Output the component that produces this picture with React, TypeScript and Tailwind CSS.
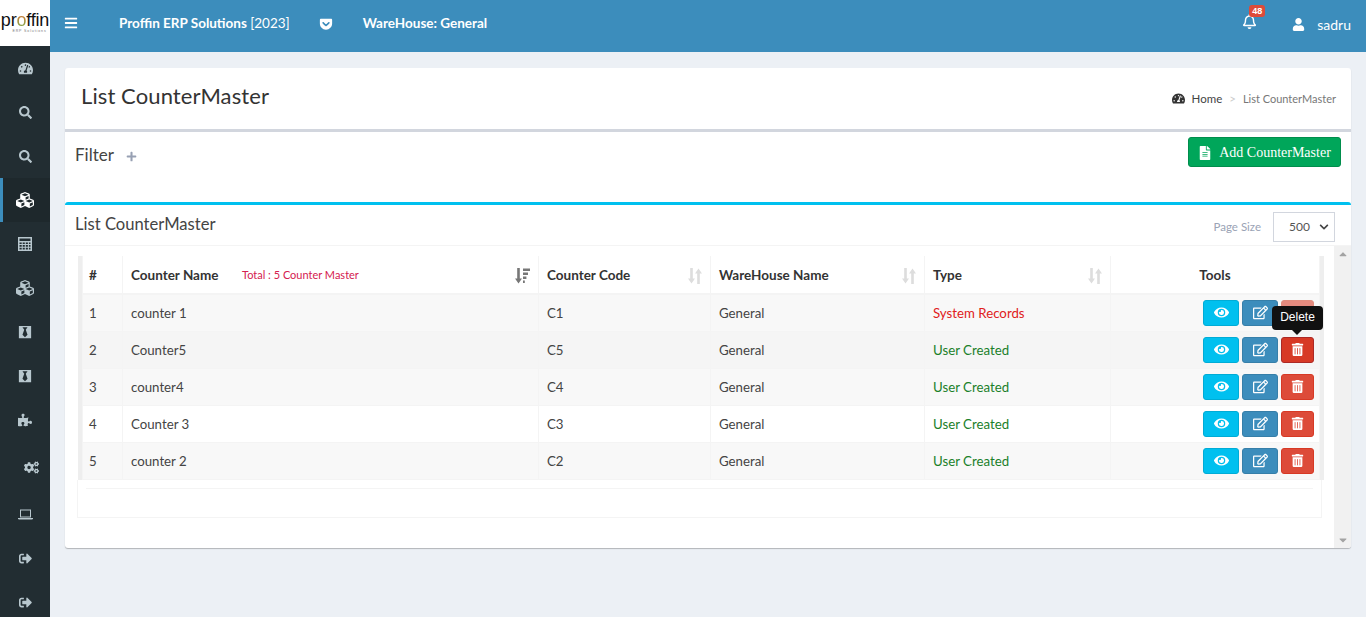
import React from "react";
import { FaBars, FaRegBell, FaBlackTie, FaChevronDown, FaCogs, FaCubes, FaEye, FaFileAlt, FaGetPocket, FaPlus, FaPuzzlePiece, FaRegEdit, FaSearch, FaSignOutAlt, FaTachometerAlt, FaTrashAlt, FaUser, FaCaretUp, FaCaretDown } from "react-icons/fa";

function Calc({ size = 14 }: { size?: number }) {
  return (
    <svg width={size} height={size} viewBox="0 0 14 14" fill="currentColor">
      <path fillRule="evenodd" d="M0 0h14v14H0zM1.5 1.5v2.5h11V1.5zM1.5 5.5v1.6h2.2V5.5zM4.7 5.5v1.6h2.1V5.5zM7.8 5.5v1.6h2.1V5.5zM10.9 5.5v1.6h1.6V5.5zM1.5 8.1v1.6h2.2V8.1zM4.7 8.1v1.6h2.1V8.1zM7.8 8.1v1.6h2.1V8.1zM10.9 8.1v1.6h1.6V8.1zM1.5 10.7v1.8h2.2v-1.8zM4.7 10.7v1.8h2.1v-1.8zM7.8 10.7v1.8h2.1v-1.8zM10.9 10.7v1.8h1.6v-1.8z" />
    </svg>
  );
}

function LaptopIcon({ size = 15 }: { size?: number }) {
  return (
    <svg width={size} height={size} viewBox="0 0 15 15" fill="currentColor">
      <path fillRule="evenodd" d="M2 2.5h11v8H2zM3 3.5v6h9v-6z" />
      <path d="M0 11h15v.6l-.7.9H.7L0 11.6z" />
    </svg>
  );
}

const side = [
  { I: FaTachometerAlt, s: 15 },
  { I: FaSearch, s: 13 },
  { I: FaSearch, s: 13 },
  { I: FaCubes, s: 18, active: true },
  { I: Calc, s: 14 },
  { I: FaCubes, s: 18 },
  { I: FaBlackTie, s: 14 },
  { I: FaBlackTie, s: 14 },
  { I: FaPuzzlePiece, s: 14 },
  { I: FaCogs, s: 15, gear: true },
  { I: LaptopIcon, s: 15 },
  { I: FaSignOutAlt, s: 13 },
  { I: FaSignOutAlt, s: 13 },
];

const rows = [
  ["1", "counter 1", "C1", "General", "System Records"],
  ["2", "Counter5", "C5", "General", "User Created"],
  ["3", "counter4", "C4", "General", "User Created"],
  ["4", "Counter 3", "C3", "General", "User Created"],
  ["5", "counter 2", "C2", "General", "User Created"],
];

function SortIcon() {
  return (
    <svg width="14" height="16" viewBox="0 0 14 16" fill="#dddddd" className="shrink-0">
      <path d="M2.2 0h2.6v10.5H7L3.5 15.5 0 10.5h2.2z" />
      <path d="M9.2 16h2.6V5.5H14L10.5.5 7 5.5h2.2z" />
    </svg>
  );
}

function SortedIcon() {
  return (
    <svg width="15" height="16" viewBox="0 0 15 16" fill="#777777" className="ml-auto shrink-0">
      <path d="M2.2 0h2.6v10.5H7L3.5 15.5 0 10.5h2.2z" />
      <path d="M8 .5h7v2.4H8zM8 4.5h5v2.4H8zM8 8.5h3.4v2.4H8zM8 12.5h1.8v2.4H8z" />
    </svg>
  );
}

export default function App() {
  return (
    <div className="flex h-[617px] w-[1366px] overflow-hidden bg-[#ecf0f5] text-[13.25px] text-[#444444] font-['Lato','Noto_Sans',sans-serif]">
      <aside className="flex w-[50px] shrink-0 flex-col bg-[#222d32]">
        <div className="flex h-[46px] shrink-0 flex-col overflow-hidden bg-white pt-[8px] text-center">
          <div className="font-['Liberation_Sans',sans-serif] text-[18px] leading-[24px] tracking-[-0.2px] text-[#111111]">
            pr<span className="bg-gradient-to-b from-[#e0602f] to-[#5fae4c] bg-clip-text text-transparent">o</span>ffin
          </div>
          <div className="-mt-[3px] whitespace-nowrap pl-[9px] font-['Liberation_Sans',sans-serif] text-[3.5px] leading-[5px] tracking-[0.9px] text-[#777777]">ERP Solutions</div>
        </div>
        {side.map(({ I, s, active, gear }, i) => (
          <div
            key={i}
            className={
              active
                ? "flex h-[44px] shrink-0 items-center justify-center border-l-[3px] border-[#3c8dbc] bg-[#1e282c] pr-[3px] text-white"
                : gear
                  ? "flex h-[50px] shrink-0 items-center justify-center pl-[12px] text-[#b8c7ce]"
                  : "flex h-[44px] shrink-0 items-center justify-center text-[#b8c7ce]"
            }
          >
            <I size={s} />
          </div>
        ))}
      </aside>

      <div className="flex min-w-0 flex-1 flex-col">
        <header className="flex h-[52px] shrink-0 items-center bg-[#3c8dbc] text-[13.5px] text-white">
          <FaBars size={14} className="ml-[14px] -mt-[6px]" />
          <div className="ml-[41px] -mt-[6px] font-bold">
            Proffin ERP Solutions <span className="font-normal">[2023]</span>
          </div>
          <FaGetPocket size={14} className="ml-[29px] -mt-[5px]" />
          <div className="ml-[30px] -mt-[6px] font-bold">WareHouse: General</div>
          <div className="relative ml-auto mr-[35px] -mt-[10px]">
            <FaRegBell size={15} />
            <span className="absolute left-[7px] -top-[9px] rounded-[3px] bg-[#dd4b39] px-[3px] font-['Liberation_Sans',sans-serif] text-[9px] font-bold leading-[12px] text-white">48</span>
          </div>
          <FaUser size={13} className="mr-[12px] -mt-[4px]" />
          <span className="mr-[15px] -mt-[4px] text-[14px]">sadru</span>
        </header>

        <main className="px-[15px] pt-[16px]">
          <section className="flex h-[480px] flex-col rounded-[3px] bg-white shadow-[0_1px_1px_rgba(0,0,0,0.25)]">
            <div className="flex h-[61px] shrink-0 items-center justify-between pl-[16px] pr-[15px]">
              <h1 className="-mt-[5px] text-[22px] leading-none tracking-[0.1px] text-[#333333]">List CounterMaster</h1>
              <div className="flex items-center text-[11.5px] text-[#444444]">
                <FaTachometerAlt size={13} className="text-[#333333]" />
                <span className="ml-[7px]">Home</span>
                <span className="mx-[7px] text-[#cccccc]">&gt;</span>
                <span className="mt-[1px] text-[11px] text-[#777777]">List CounterMaster</span>
              </div>
            </div>

            <div className="flex h-[73px] shrink-0 items-start justify-between border-t-[3px] border-[#d2d6de] pl-[10px] pr-[10px]">
              <div className="mt-[13px] flex items-center text-[17px] leading-[20px] text-[#444444]">
                Filter
                <FaPlus size={11} className="ml-[12px] mt-[2px] text-[#97a0b3]" />
              </div>
              <button className="mt-[5px] flex h-[30px] w-[153px] items-center justify-center rounded-[3px] border border-[#008d4c] bg-[#00a65a] pt-[1px] font-['Liberation_Serif',serif] text-[14px] text-white">
                <FaFileAlt size={14} className="mr-[7px]" />
                Add CounterMaster
              </button>
            </div>

            <div className="flex h-[44px] shrink-0 items-center justify-between rounded-t-[3px] border-t-[3px] border-b border-[#00c0ef] border-b-[#f4f4f4] pl-[10px] pr-[16px]">
              <h2 className="-mt-[2px] text-[16.6px] leading-none text-[#444444]">List CounterMaster</h2>
              <div className="mt-[4px] flex items-center">
                <span className="mr-[12px] text-[11.5px] text-[#9aa3b5]">Page Size</span>
                <div className="flex h-[30px] w-[62px] items-center justify-between border border-[#d2d6de] pl-[15px] pr-[5px] text-[12px] text-[#555555]">
                  500
                  <FaChevronDown size={10} className="text-[#444444]" />
                </div>
              </div>
            </div>

            <div className="flex min-h-0 flex-1">
              <div className="min-w-0 flex-1 pl-[12px] pr-[12px] pt-[10px]">
                <div className="ml-[1px] mr-[-2px] border-l-[4px] border-r-[5px] border-[#eeeeee] bg-white">
                  <table className="w-[1237px] table-fixed border-collapse">
                    <colgroup>
                      <col className="w-[40px]" />
                      <col className="w-[416px]" />
                      <col className="w-[172px]" />
                      <col className="w-[214px]" />
                      <col className="w-[186px]" />
                      <col className="w-[209px]" />
                    </colgroup>
                    <thead>
                      <tr className="h-[38px] border-b-2 border-[#f4f4f4] text-left text-[13.5px] text-[#333333]">
                        <th className="border-x border-[#f4f4f4] pl-[6px] pt-[2px] font-bold">#</th>
                        <th className="border-x border-[#f4f4f4] px-[8px] pt-[2px] font-bold">
                          <div className="flex items-center">
                            <span className="w-[111px]">Counter Name</span>
                            <span className="text-[11px] font-normal text-[#d4204f]">Total : 5 Counter Master</span>
                            <SortedIcon />
                          </div>
                        </th>
                        <th className="border-x border-[#f4f4f4] px-[8px] pt-[2px] font-bold">
                          <div className="flex items-center justify-between">Counter Code<SortIcon /></div>
                        </th>
                        <th className="border-x border-[#f4f4f4] px-[8px] pt-[2px] font-bold">
                          <div className="flex items-center justify-between">WareHouse Name<SortIcon /></div>
                        </th>
                        <th className="border-x border-[#f4f4f4] px-[8px] pt-[2px] font-bold">
                          <div className="flex items-center justify-between">Type<SortIcon /></div>
                        </th>
                        <th className="border-x border-[#f4f4f4] px-[8px] pt-[2px] text-center font-bold">Tools</th>
                      </tr>
                    </thead>
                    <tbody>
                      {rows.map((r, i) => (
                        <tr key={r[0]} className={i === 1 ? "h-[37px] border-b border-[#f4f4f4] bg-[#f5f5f5]" : i % 2 === 0 ? "h-[37px] border-b border-[#f4f4f4] bg-[#f8f8f8]" : "h-[37px] border-b border-[#f4f4f4] bg-white"}>
                          <td className="border-x border-[#f4f4f4] pl-[6px] pt-[2px]">{r[0]}</td>
                          <td className="border-x border-[#f4f4f4] px-[8px] pt-[2px]">{r[1]}</td>
                          <td className="border-x border-[#f4f4f4] px-[8px] pt-[2px]">{r[2]}</td>
                          <td className="border-x border-[#f4f4f4] px-[8px] pt-[2px]">{r[3]}</td>
                          <td className={i === 0 ? "border-x border-[#f4f4f4] px-[8px] pt-[2px] text-[#e02020]" : "border-x border-[#f4f4f4] px-[8px] pt-[2px] text-[#1a802a]"}>{r[4]}</td>
                          <td className="border-x border-[#f4f4f4] pr-[5px]">
                            <div className="flex justify-end gap-[3px]">
                              <button className="flex h-[26px] w-[36px] items-center justify-center rounded-[3px] border border-[#00acd6] bg-[#00c0ef] text-white"><FaEye size={15} /></button>
                              <button className="flex h-[26px] w-[36px] items-center justify-center rounded-[3px] border border-[#367fa9] bg-[#3c8dbc] text-white"><FaRegEdit size={15} /></button>
                              <div className="relative">
                                <button className={i === 0 ? "flex h-[26px] w-[33px] items-center justify-center rounded-[3px] border border-[#e08e7f] bg-[#e58b7f] text-white" : i === 1 ? "flex h-[26px] w-[33px] items-center justify-center rounded-[3px] border border-[#ac2925] bg-[#d73925] text-white" : "flex h-[26px] w-[33px] items-center justify-center rounded-[3px] border border-[#d73925] bg-[#dd4b39] text-white"}><FaTrashAlt size={13} /></button>
                                {i === 0 && (
                                  <div className="absolute left-[-9px] top-[6px] z-10 flex h-[24px] w-[51px] items-center justify-center rounded-[4px] bg-[#111111] pb-[1px] font-['Liberation_Sans',sans-serif] text-[12px] text-white">
                                    Delete
                                    <span className="absolute left-[20px] top-[24px] h-0 w-0 border-x-[5px] border-t-[5px] border-x-transparent border-t-[#111111]" />
                                  </div>
                                )}
                              </div>
                            </div>
                          </td>
                        </tr>
                      ))}
                    </tbody>
                  </table>
                </div>
                <div className="h-[38px] w-[1245px] border-x border-b border-[#f4f4f4] px-[8px] pt-[8px]">
                  <div className="border-t border-[#f4f4f4]" />
                </div>
              </div>
              <div className="flex w-[17px] shrink-0 flex-col items-center justify-between rounded-br-[3px] bg-[#f1f1f1] py-[2px] text-[#a3a3a3]">
                <FaCaretUp size={12} />
                <FaCaretDown size={12} />
              </div>
            </div>
          </section>
        </main>
      </div>
    </div>
  );
}
